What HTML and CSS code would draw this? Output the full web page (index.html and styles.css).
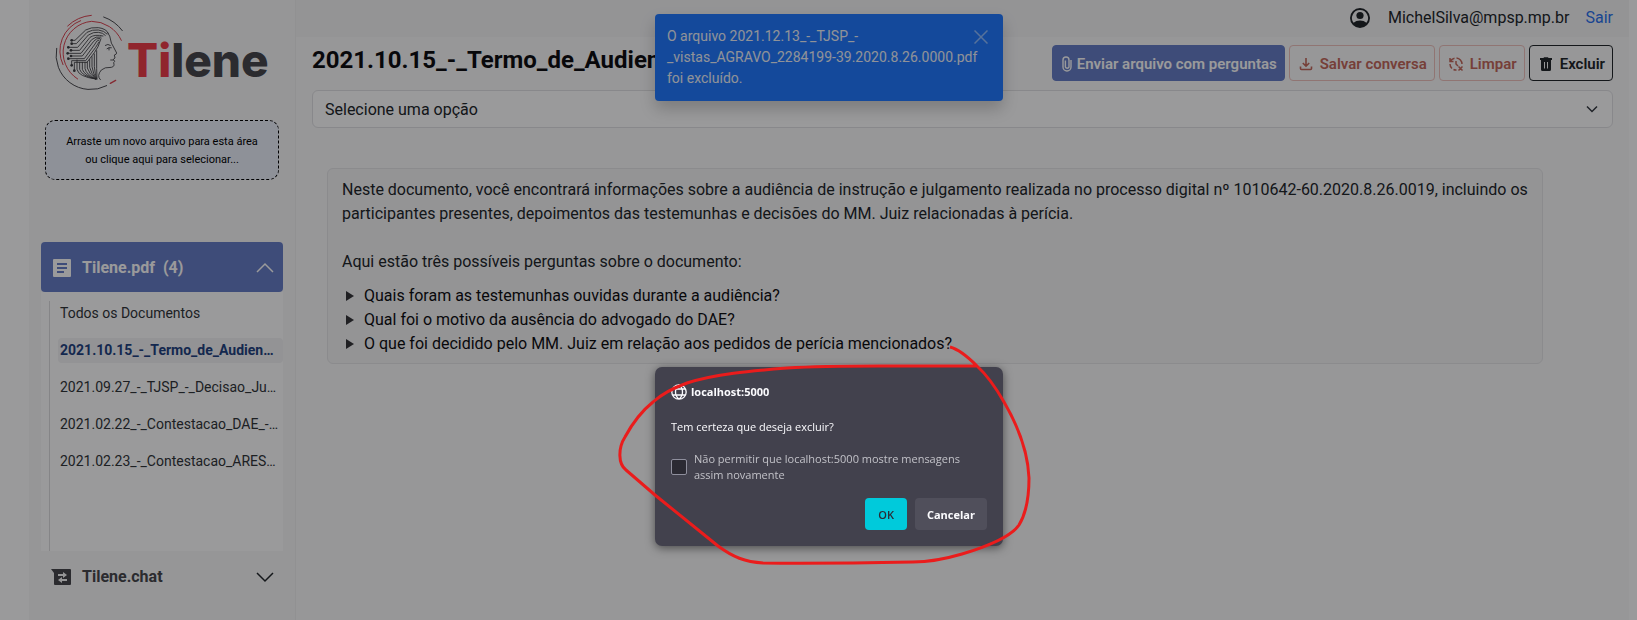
FILE: index.html
```html
<!DOCTYPE html>
<html lang="pt-BR">
<head>
<meta charset="utf-8">
<meta name="viewport" content="width=device-width, initial-scale=1">
<title>Tilene</title>
<link rel="stylesheet" href="styles.css">
</head>
<body>
<div class="app">
  <aside class="sidebar">
    <div class="logo">
      <svg class="logo-mark" viewBox="30 18 216 228" fill="none" stroke-linecap="round" aria-hidden="true">
        <g stroke="#4a4a4e" stroke-width="3">
          <path d="M35 121A104 104 0 0 0 185 233"/>
          <path d="M176 27A118 118 0 0 1 232 68"/>
        </g>
        <g stroke="#dd4450" stroke-width="3">
          <path d="M68 54A116 116 0 0 1 139 22"/>
          <path d="M98 213A94 94 0 0 1 140 40A98 98 0 0 1 229 97"/>
          <path d="M54 170A96 96 0 0 1 107 38"/>
          <path d="M196 226L212 217" stroke-width="4"/>
        </g>
        <g stroke="#3c3c40" stroke-width="2.6" stroke-linejoin="round">
          <path d="M80 97H90L122 66Q138 57 160 59Q184 62 190 76"/>
          <path d="M80 107H94L126 73Q142 64 160 66Q178 68 186 78"/>
          <path d="M72 118H98L130 81Q146 71 160 73Q174 74 181 82"/>
          <path d="M80 127H104L135 88Q150 78 174 84"/>
          <path d="M70 136H108L140 95Q152 84 168 87"/>
          <path d="M80 144H112L146 100Q154 90 164 91"/>
          <path d="M72 152H118L150 108Q154 97 162 96"/>
          <path d="M80 172V158H122L152 118Q158 108 162 102"/>
          <path d="M88 188V163H126L148 134Q160 120 168 92"/>
          <path d="M96 156V184Q100 206 152 213"/>
          <path d="M104 163V184Q110 204 152 213"/>
          <path d="M112 163V184Q118 202 152 213"/>
          <path d="M120 163V182Q124 200 152 213"/>
          <path d="M127 162V180Q132 198 152 213"/>
          <path d="M134 154V178Q138 196 153 213"/>
          <path d="M141 146V176Q144 196 154 213"/>
          <path d="M148 138V176Q150 196 155 213"/>
          <path d="M155 128V182L156 213"/>
          <path d="M188 74Q196 84 197 96Q198 106 204 114L215 135Q214 140 208 141L210 150L205 154L209 160L206 164Q210 176 199 178Q178 177 169 186Q154 204 166 215"/>
          <path d="M181 112Q189 106 196 112M186 122Q192 117 199 119M192 120V126M197 156H205"/>
        </g>
        <g fill="#3c3c40">
          <circle cx="80" cy="97" r="4"/><circle cx="80" cy="107" r="4"/><circle cx="70" cy="118" r="4"/>
          <circle cx="78" cy="127" r="4"/><circle cx="68" cy="136" r="4"/><circle cx="78" cy="144" r="4"/>
          <circle cx="70" cy="152" r="4"/><circle cx="80" cy="172" r="4"/><circle cx="88" cy="188" r="4"/>
        </g>
      </svg>
      <span class="logo-text"><span class="logo-red">Ti</span>lene</span>
    </div>

    <button class="dropzone" type="button">Arraste um novo arquivo para esta área<br>ou clique aqui para selecionar...</button>

    <nav class="accordion">
      <button class="acc-head acc-open" type="button" aria-expanded="true">
        <svg class="acc-icon" viewBox="0 0 20 20" aria-hidden="true"><path fill="currentColor" fill-rule="evenodd" d="M2 1H18A1 1 0 0 1 19 2V18A1 1 0 0 1 18 19H2A1 1 0 0 1 1 18V2A1 1 0 0 1 2 1ZM5 5V7H15V5ZM5 9V11H15V9ZM5 13V15H12V13Z"/></svg>
        <span>Tilene.pdf&nbsp; (4)</span>
        <svg class="acc-chevron" viewBox="0 0 18 18" aria-hidden="true"><path d="M1 13L9 5L17 13"/></svg>
      </button>
      <div class="acc-panel">
        <ul class="docs">
          <li><a href="#">Todos os Documentos</a></li>
          <li><a class="active" href="#">2021.10.15_-_Termo_de_Audien…</a></li>
          <li><a href="#">2021.09.27_-_TJSP_-_Decisao_Ju…</a></li>
          <li><a href="#">2021.02.22_-_Contestacao_DAE_-…</a></li>
          <li><a href="#">2021.02.23_-_Contestacao_ARES…</a></li>
        </ul>
      </div>
      <button class="acc-head" type="button" aria-expanded="false">
        <svg class="acc-icon" viewBox="0 0 20 20" aria-hidden="true"><path fill="currentColor" fill-rule="evenodd" d="M-1 2H18A1 1 0 0 1 19 3V17A1 1 0 0 1 18 18H3A1 1 0 0 1 2 17V6ZM6 7V9H11V11L15 8L11 5V7ZM15 12H10V10L6 13L10 16V14H15Z"/></svg>
        <span>Tilene.chat</span>
        <svg class="acc-chevron" viewBox="0 0 18 18" aria-hidden="true"><path d="M1 5L9 13L17 5"/></svg>
      </button>
    </nav>
  </aside>

  <div class="page">
    <header class="topbar">
      <svg class="user-icon" viewBox="0 0 20 20" aria-hidden="true"><path fill="currentColor" fill-rule="evenodd" d="M10 0A10 10 0 1 1 10 20A10 10 0 0 1 10 0ZM10 2A8 8 0 0 0 3.6 14.8Q6 12.5 10 12.5T16.400 14.800A8 8 0 0 0 10 2Z"/><circle cx="10" cy="7.500" r="3.600" fill="currentColor"/></svg>
      <span>MichelSilva@mpsp.mp.br</span>
      <a href="#">Sair</a>
    </header>

    <main class="main">
      <div class="title-row">
        <h1>2021.10.15_-_Termo_de_Audiencia</h1>
        <div class="actions">
          <button class="btn btn-blue" type="button">
            <svg viewBox="0 0 16 16" aria-hidden="true"><path fill="none" stroke="currentColor" stroke-width="1.400" d="M12 4V11A4 4 0 0 1 4 11V4A3 3 0 0 1 10 4V11A1.900 1.900 0 0 1 6.400 11V4.500"/></svg>
            Enviar arquivo com perguntas</button>
          <button class="btn btn-red" type="button">
            <svg viewBox="0 0 16 16" aria-hidden="true"><path fill="none" stroke="currentColor" stroke-width="1.600" d="M8 2V10M4.800 7L8 10.200L11.200 7M2.500 10.500V12.500A1 1 0 0 0 3.500 13.500H12.500A1 1 0 0 0 13.500 12.500V10.500"/></svg>
            Salvar conversa</button>
          <button class="btn btn-red" type="button">
            <svg viewBox="0 0 16 16" aria-hidden="true"><path fill="none" stroke="currentColor" stroke-width="1.500" d="M2 2V5.500H5.500M2.300 5.200A6 6 0 0 1 6.500 2.200M8.500 2A6 6 0 0 1 14 8M8 5V8L10 10M2 8A6 6 0 0 0 4 12.500M5.500 13.500A6 6 0 0 0 8.500 14M10.500 10.500L14.500 14.500M14.500 10.500L10.500 14.500"/></svg>
            Limpar</button>
          <button class="btn btn-dark" type="button">
            <svg viewBox="0 0 16 16" aria-hidden="true"><path fill="currentColor" fill-rule="evenodd" d="M2 2H5.500L6 1.200H10L10.500 2H14V4H2ZM3 4H13V13.500A1.500 1.500 0 0 1 11.500 15H4.500A1.500 1.500 0 0 1 3 13.500ZM6 6V12.500H7V6ZM9 6V12.500H10V6Z"/></svg>
            Excluir</button>
        </div>
      </div>

      <div class="select-wrap">
        <select aria-label="Selecione uma opção"><option>Selecione uma opção</option></select>
        <svg class="select-chevron" viewBox="0 0 12 12" aria-hidden="true"><path d="M1 3.500L6 8.500L11 3.500"/></svg>
      </div>

      <section class="message">
        <p>Neste documento, você encontrará informações sobre a audiência de instrução e julgamento realizada no processo digital nº 1010642-60.2020.8.26.0019, incluindo os participantes presentes, depoimentos das testemunhas e decisões do MM. Juiz relacionadas à perícia.</p>
        <p>Aqui estão três possíveis perguntas sobre o documento:</p>
        <ul class="questions">
          <li>Quais foram as testemunhas ouvidas durante a audiência?</li>
          <li>Qual foi o motivo da ausência do advogado do DAE?</li>
          <li>O que foi decidido pelo MM. Juiz em relação aos pedidos de perícia mencionados?</li>
        </ul>
      </section>
    </main>
  </div>
</div>

<div class="layer toast-layer">
  <div class="toast" role="status">
    <span>O arquivo 2021.12.13_-_TJSP_-<br>_vistas_AGRAVO_2284199-39.2020.8.26.0000.pdf foi excluído.</span>
    <button class="toast-close" type="button" aria-label="Fechar">
      <svg viewBox="0 0 14 14" aria-hidden="true"><path d="M0.500 0.500L13.500 13.500M13.500 0.500L0.500 13.500"/></svg>
    </button>
  </div>
</div>

<div class="backdrop"></div>

<div class="layer dialog-layer">
  <div class="dialog-box">
    <form class="dialog" role="alertdialog" aria-labelledby="origin" aria-describedby="question">
      <div class="origin" id="origin">
        <svg viewBox="0 0 16 16" aria-hidden="true"><path fill="none" stroke="currentColor" stroke-width="1.300" d="M8 .8A7.200 7.200 0 1 1 8 15.200A7.200 7.200 0 0 1 8 .8ZM8 .8Q4.500 3.500 4.500 8T8 15.200M8 .8Q11.500 3.500 11.500 8T8 15.200M1.800 5H14.200M1.800 11H14.200"/></svg>
        localhost:5000
      </div>
      <p class="question" id="question">Tem certeza que deseja excluir?</p>
      <div class="check">
        <input type="checkbox" id="block">
        <label for="block">Não permitir que localhost:5000 mostre mensagens<br>assim novamente</label>
      </div>
      <div class="dialog-actions">
        <button class="dlg-btn dlg-ok" type="button">OK</button>
        <button class="dlg-btn" type="button">Cancelar</button>
      </div>
    </form>
    <svg class="scribble" viewBox="600 340 450 240" aria-hidden="true"><path d="M950 347C958 349 968 357 977 366C988 376 996 388 1004 402C1018 426 1028 452 1029 478C1029 495 1027 512 1019 525C1010 538 985 547 962 554C945 559 930 562 913 562C860 563 810 563.500 763 563C745 562 733 557 718 546L655 495L626 470C618 464 618 448 625 437C632 424 643 410 653 402C662 394 673 388 687 383C715 374 750 371 787 368C820 366 850 366 880 366H977"/></svg>
  </div>
</div>
</body>
</html>
```

FILE: styles.css
```css
* { box-sizing: border-box; }

body {
  margin: 0;
  background: #fff;
  color: #212529;
  font: 16px/24px Roboto, "Liberation Sans", sans-serif;
}

button, select, input { font: inherit; color: inherit; margin: 0; }
button { cursor: pointer; }
p, h1, ul { margin: 0; padding: 0; }
a { text-decoration: none; }

.app {
  display: flex;
  min-height: 100vh;
  padding: 0 8px 0 29px;
}

/* Sidebar */
.sidebar {
  flex: none;
  width: 267px;
  padding: 14px 12px 0;
  background: #f8f8f9;
  border-right: 1px solid #f0f0f1;
}

.logo {
  display: flex;
  height: 76px;
  padding-left: 14px;
}
.logo-mark { flex: none; width: 72px; height: 76px; }
.logo-text {
  color: #47474b;
  font: 800 46px/92px Inter, sans-serif;
}
.logo-red { color: #ee3c48; }

.dropzone {
  display: block;
  width: calc(100% - 8px);
  height: 60px;
  margin: 30px 4px 0;
  padding: 2px 0 0;
  background: #ebf0fb;
  border: 1px dashed #000;
  border-radius: 10px;
  color: #000;
  font-size: 11px;
  line-height: 18px;
}

.accordion { margin-top: 62px; }
.acc-head {
  display: flex;
  align-items: center;
  width: 100%;
  height: 50px;
  padding: 2px 9px 0 11px;
  gap: 10px;
  background: none;
  border: 0;
  border-radius: 4px;
  color: #47474b;
  font-weight: 700;
}
.acc-open { background: #677ec6; color: #fff; }
.acc-icon { width: 20px; height: 20px; overflow: visible; }
.acc-chevron {
  width: 18px;
  height: 18px;
  margin-left: auto;
  fill: none;
  stroke: #212529;
  stroke-width: 1.500;
}
.acc-open .acc-chevron { stroke: #fff; }

.acc-panel {
  height: 259px;
  padding: 9px 0 0 8px;
  background: #fff;
}
.docs {
  height: 100%;
  padding-left: 8px;
  border-left: 1px solid #dcdcde;
  list-style: none;
}
.docs li { padding-bottom: 12px; }
.docs a {
  display: block;
  padding: 0 2px;
  border-radius: 4px;
  color: #303438;
  font-size: 14px;
  line-height: 25px;
  white-space: nowrap;
}
.docs .active { background: #f4f4f5; color: #1f4280; font-weight: 700; }

/* Page */
.page { flex: 1; min-width: 0; background: #fafafb; }
.topbar {
  display: flex;
  align-items: center;
  justify-content: flex-end;
  height: 37px;
  padding: 0 16px 2px;
  background: #f5f5f6;
}
.topbar a { margin-left: 16px; color: #2a72ee; }
.user-icon { width: 20px; height: 20px; margin-right: 18px; }

.main { padding: 8px 16px; }
.title-row {
  display: flex;
  align-items: flex-start;
  justify-content: space-between;
  gap: 16px;
}
h1 {
  overflow: hidden;
  color: #0d0d10;
  font-size: 24px;
  line-height: 30px;
  font-weight: 700;
  white-space: nowrap;
}
.actions { display: flex; gap: 4px; }
.btn {
  display: flex;
  align-items: center;
  gap: 6px;
  height: 36px;
  padding: 1px 7px 0 8px;
  background: none;
  border: 1px solid;
  border-radius: 4px;
  font-size: 15px;
  font-weight: 600;
  white-space: nowrap;
}
.btn svg { width: 16px; height: 16px; }
.btn-blue {
  gap: 2px;
  padding-left: 6px;
  background: #677ec6;
  border-color: #677ec6;
  color: #fff;
}
.btn-red { border-color: #eec2bc; color: #c4685a; }
.btn-dark { border-color: #212529; }

.select-wrap { position: relative; margin-top: 9px; }
select {
  display: block;
  width: 100%;
  height: 38px;
  padding: 2px 12px 0;
  appearance: none;
  background: #fff;
  border: 1px solid #e2e2e4;
  border-radius: 6px;
}
.select-chevron {
  position: absolute;
  top: 13px;
  right: 15px;
  width: 12px;
  height: 12px;
  fill: none;
  stroke: #343a40;
  stroke-width: 1.500;
  pointer-events: none;
}

.message {
  margin: 40px 70px 0 15px;
  padding: 9px 12px 7px 14px;
  background: #f5f5f6;
  border: 1px solid #e6e6e8;
  border-radius: 6px;
}
.message p + p { margin-top: 24px; }
.questions {
  margin-top: 10px;
  color: #0d0d10;
  list-style: none;
}
.questions li { display: flex; align-items: center; gap: 10px; padding-left: 4px; }
.questions li::before {
  content: "";
  border: solid transparent;
  border-width: 5px 0 5px 8px;
  border-left-color: #343438;
}

/* Overlays */
.layer {
  position: absolute;
  inset: 0;
  display: flex;
  align-items: flex-start;
  justify-content: center;
  padding-left: 21px;
  overflow: hidden;
}
.backdrop { position: fixed; inset: 0; background: rgba(2, 2, 6, 0.4); }
.toast-layer { padding-top: 14px; }
.toast {
  display: flex;
  align-items: flex-start;
  width: 348px;
  padding: 12px 15px 12px 12px;
  background: #2079ff;
  border-radius: 4px;
  box-shadow: 0 8px 16px rgba(0, 0, 0, 0.2);
  color: #eef2fa;
  font-size: 14px;
  line-height: 21px;
}
.toast span { flex: 1; margin-right: -14px; }
.toast-close {
  display: flex;
  margin-top: 4px;
  padding: 0;
  background: none;
  border: 0;
  opacity: 0.5;
}
.toast-close svg { width: 14px; height: 14px; stroke: #fff; stroke-width: 1.500; }

.dialog-layer { padding-top: 367px; }
.dialog-box { position: relative; width: 348px; }
.dialog {
  padding: 17px 16px 16px;
  background: #42414d;
  border-radius: 7px;
  box-shadow: 0 2px 10px rgba(0, 0, 0, 0.5);
  color: #fbfbfe;
  font: 11px/16px "Open Sans", "Noto Sans", sans-serif;
}
.origin { display: flex; align-items: center; gap: 4px; font-weight: 700; }
.origin svg { width: 16px; height: 16px; }
.question { margin-top: 19px; }
.check { display: flex; align-items: center; gap: 7px; margin-top: 16px; color: #c2c2c8; }
.check input {
  flex: none;
  width: 16px;
  height: 16px;
  appearance: none;
  background: #2b2a33;
  border: 1px solid #8f8f9d;
  border-radius: 2px;
}
.dialog-actions { display: flex; justify-content: flex-end; gap: 8px; margin-top: 15px; }
.dlg-btn {
  height: 32px;
  padding: 1px 12px 0;
  background: #504f5b;
  border: 0;
  border-radius: 4px;
  color: #fbfbfe;
  font-weight: 700;
}
.dlg-ok { padding: 1px 13px 0; background: #00cadb; color: #2b2a33; font-weight: 600; }

.scribble {
  position: absolute;
  top: -27px;
  left: -55px;
  width: 450px;
  height: 240px;
  fill: none;
  stroke: #ea1c1c;
  stroke-width: 3;
  pointer-events: none;
}
```
